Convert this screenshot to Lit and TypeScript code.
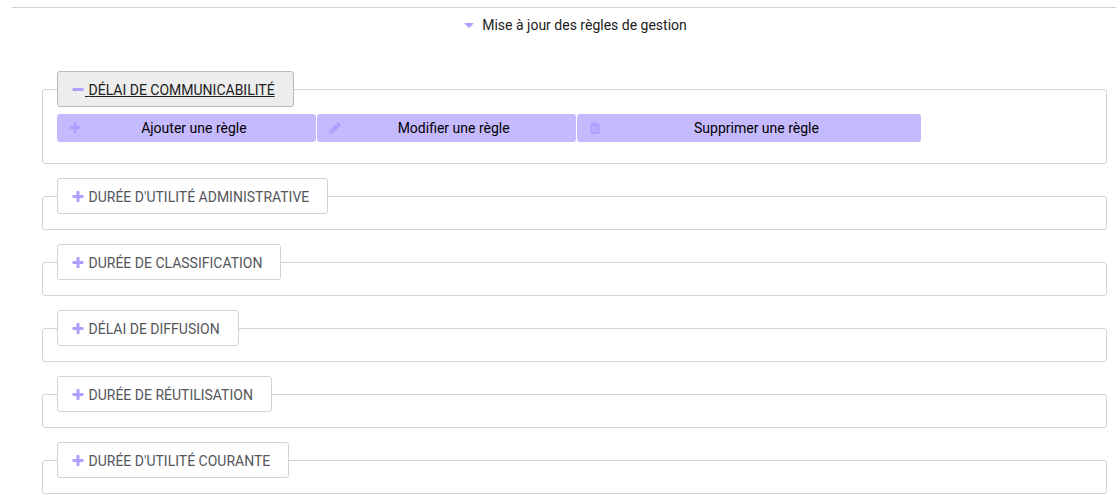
import { LitElement, css, html, svg, nothing } from "lit";
import { customElement, property, state } from "lit/decorators.js";

const ICONS: Record<string, string> = {
  plus: "M1600 736v192q0 40-28 68t-68 28h-416v416q0 40-28 68t-68 28h-192q-40 0-68-28t-28-68v-416h-416q-40 0-68-28t-28-68v-192q0-40 28-68t68-28h416v-416q0-40 28-68t68-28h192q40 0 68 28t28 68v416h416q40 0 68 28t28 68z",
  minus: "M1600 736v192q0 40-28 68t-68 28h-1216q-40 0-68-28t-28-68v-192q0-40 28-68t68-28h1216q40 0 68 28t28 68z",
  pencil: "M491 1536l91-91-235-235-91 91v107h128v128h107zm523-928q0-22-22-22-10 0-17 7l-542 542q-7 7-7 17 0 22 22 22 10 0 17-7l542-542q7-7 7-17zm-54-192l416 416-832 832h-416v-416zm683 96q0 53-37 90l-166 166-416-416 166-165q36-38 90-38 53 0 91 38l235 234q37 39 37 91z",
  trash: "M704 1376v-704q0-14-9-23t-23-9h-64q-14 0-23 9t-9 23v704q0 14 9 23t23 9h64q14 0 23-9t9-23zm256 0v-704q0-14-9-23t-23-9h-64q-14 0-23 9t-9 23v704q0 14 9 23t23 9h64q14 0 23-9t9-23zm256 0v-704q0-14-9-23t-23-9h-64q-14 0-23 9t-9 23v704q0 14 9 23t23 9h64q14 0 23-9t9-23zm-544-992h448l-48-117q-7-9-17-11h-317q-10 2-17 11zm928 32v64q0 14-9 23t-23 9h-96v948q0 83-47 143.5t-113 60.5h-832q-66 0-113-58.5t-47-141.5v-952h-96q-14 0-23-9t-9-23v-64q0-14 9-23t23-9h309l70-167q15-37 54-63t79-26h320q40 0 79 26t54 63l70 167h309q14 0 23 9t9 23z",
  caret: "M1472 704q0 26-19 45l-512 512q-19 19-45 19t-45-19l-512-512q-19-19-19-45t19-45 45-19h1024q26 0 45 19t19 45z",
};

@customElement("ui-icon")
class UiIcon extends LitElement {
  @property() name = "plus";

  static styles = css`
    :host {
      display: inline-block;
      width: 14px;
      height: 14px;
    }
    .glyph {
      display: block;
      width: 100%;
      height: 100%;
      fill: #ae9eff;
    }
  `;

  render() {
    return html`<svg class="glyph" viewBox="0 0 1792 1792" aria-hidden="true">
      ${svg`<path d=${ICONS[this.name]} />`}
    </svg>`;
  }
}

const CATEGORIES = [
  "Délai de communicabilité",
  "Durée d'utilité administrative",
  "Durée de classification",
  "Délai de diffusion",
  "Durée de réutilisation",
  "Durée d'utilité courante",
];

const ACTIONS = [
  { icon: "plus", label: "Ajouter une règle", wide: false },
  { icon: "pencil", label: "Modifier une règle", wide: false },
  { icon: "trash", label: "Supprimer une règle", wide: true },
];

@customElement("app-root")
class AppRoot extends LitElement {
  @state() private expanded = true;
  @state() private opened = new Set<number>([0]);

  static styles = css`
    :host {
      display: block;
      background: #fff;
      color: #212121;
      font: 14px/20px Roboto, "Liberation Sans", sans-serif;
    }
    .panel {
      margin: 7px 0 0 12px;
      border-top: 1px solid #d3d3d3;
      padding: 7px 9px 10px 30px;
    }
    button {
      margin: 0;
      font: inherit;
      cursor: pointer;
    }
    .title {
      display: flex;
      align-items: center;
      justify-content: center;
      gap: 6px;
      width: 100%;
      border: 0;
      padding: 0;
      background: none;
      color: inherit;
    }
    .groups {
      display: grid;
      gap: 14px;
      margin-top: 36px;
    }
    .group {
      min-width: 0;
      margin: 0;
      border: 1px solid #d3d3d3;
      border-radius: 3px;
      padding: 0 14px 15px;
    }
    .legend {
      padding: 0;
    }
    .toggle {
      display: flex;
      align-items: center;
      height: 36px;
      border: 1px solid #d3d3d3;
      border-radius: 3px;
      padding: 2px 18px 0 13px;
      background: #fff;
      color: #54565a;
      text-transform: uppercase;
      white-space: pre;
    }
    .toggle.open {
      border-color: #b9b9b9;
      background: #ededed;
      color: #212121;
      text-decoration: underline;
    }
    .actions {
      display: flex;
      gap: 1px;
      margin: 7px 0 6px;
    }
    .action {
      display: flex;
      align-items: center;
      flex: 0 0 25%;
      height: 28px;
      border: 0;
      border-radius: 3px;
      padding: 0 10px 0 11px;
      background: #c6baff;
      color: #000;
    }
    .action.wide {
      flex-basis: 33.3333%;
    }
    .label {
      flex: 1;
      text-align: center;
    }
  `;

  private toggle(index: number) {
    const next = new Set(this.opened);
    if (!next.delete(index)) next.add(index);
    this.opened = next;
  }

  private renderGroup(name: string, index: number) {
    const open = this.opened.has(index);
    return html`
      <fieldset class="group">
        <legend class="legend">
          <button
            type="button"
            class="toggle ${open ? "open" : ""}"
            aria-expanded=${open}
            @click=${() => this.toggle(index)}
          ><ui-icon name=${open ? "minus" : "plus"}></ui-icon><span> ${name}</span></button>
        </legend>
        ${open
          ? html`<div class="actions">
              ${ACTIONS.map(
                (a) => html`<button type="button" class="action ${a.wide ? "wide" : ""}">
                  <ui-icon name=${a.icon}></ui-icon><span class="label">${a.label}</span>
                </button>`
              )}
            </div>`
          : nothing}
      </fieldset>
    `;
  }

  render() {
    return html`
      <section class="panel">
        <button
          type="button"
          class="title"
          aria-expanded=${this.expanded}
          @click=${() => (this.expanded = !this.expanded)}
        >
          <ui-icon name="caret"></ui-icon>
          <span>Mise à jour des règles de gestion</span>
        </button>
        ${this.expanded
          ? html`<div class="groups">${CATEGORIES.map((c, i) => this.renderGroup(c, i))}</div>`
          : nothing}
      </section>
    `;
  }
}
